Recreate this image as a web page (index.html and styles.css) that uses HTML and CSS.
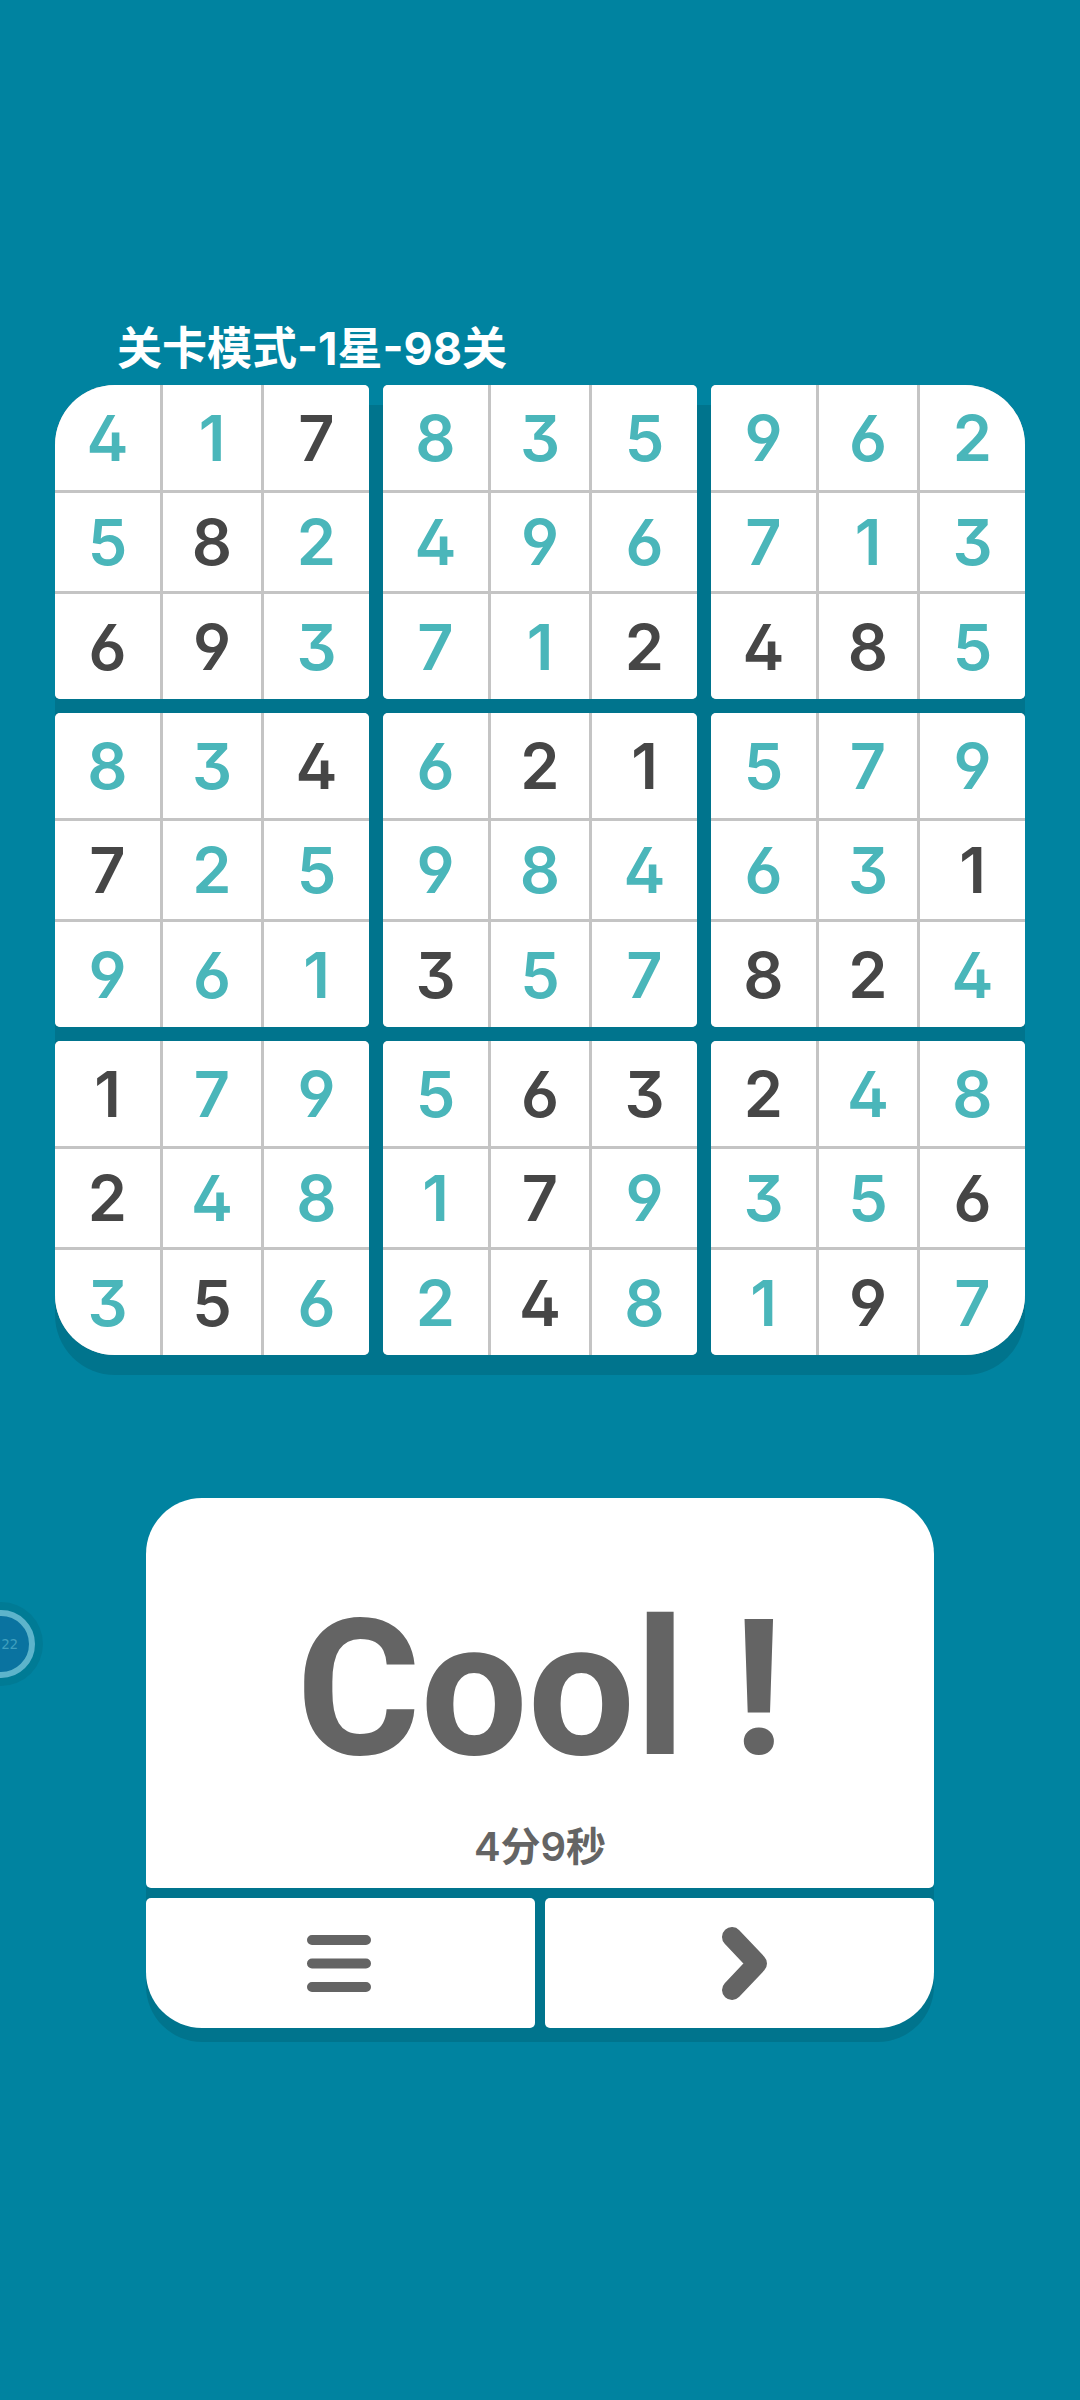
FILE: index.html
```html
<!DOCTYPE html>
<html lang="zh-CN">
<head>
    <meta charset="UTF-8">
    <meta name="viewport" content="width=device-width, initial-scale=1.0">
    <title>数独</title>
    <link rel="stylesheet" href="styles.css">
</head>
<body>

    <main class="game">
        <h1 class="level-title">关卡模式-1星-98关</h1>

        <div class="board" id="board"></div>

        <section class="result">
            <div class="result-panel">
                <p class="result-text">Cool !</p>
                <p class="result-time">4分9秒</p>
            </div>
            <div class="result-actions">
                <button class="btn" type="button" aria-label="菜单">
                    <svg class="icon" viewBox="0 0 90 90">
                        <path d="M16 22H70M16 45.5H70M16 69H70" stroke-width="10"/>
                    </svg>
                </button>
                <button class="btn" type="button" aria-label="下一关">
                    <svg class="icon" viewBox="0 0 90 90">
                        <path d="M37 19L62 45.5L37 72" stroke-width="20"/>
                    </svg>
                </button>
            </div>
        </section>
    </main>

    <button class="float-ball" type="button">22</button>

    <script>
        // g = given number, everything else was filled in by the player
        const rows = [
            '4 1 7g 8 3 5 9 6 2',
            '5 8g 2 4 9 6 7 1 3',
            '6g 9g 3 7 1 2g 4g 8g 5',
            '8 3 4g 6 2g 1g 5 7 9',
            '7g 2 5 9 8 4 6 3 1g',
            '9 6 1 3g 5 7 8g 2g 4',
            '1g 7 9 5 6g 3g 2g 4 8',
            '2g 4 8 1 7g 9 3 5 6g',
            '3 5g 6 2 4g 8 1 9g 7'
        ].map(row => row.split(' '));

        const board = document.getElementById('board');

        for (let b = 0; b < 9; b++) {
            const box = document.createElement('div');
            box.className = 'box';
            for (let i = 0; i < 9; i++) {
                const row = Math.floor(b / 3) * 3 + Math.floor(i / 3);
                const col = (b % 3) * 3 + (i % 3);
                const value = rows[row][col];
                const cell = document.createElement('div');
                cell.className = value.endsWith('g') ? 'cell given' : 'cell';
                cell.textContent = value[0];
                box.appendChild(cell);
            }
            board.appendChild(box);
        }
    </script>
</body>
</html>
```
FILE: styles.css
```css
:root {
    --bg: #0083a0;
    --shadow: #00748d;
    --line: #c4c4c4;
    --filled: #4ab6ba;
    --given: #464646;
    --text: #646464;
}

* {
    box-sizing: border-box;
}

body {
    margin: 0;
    min-height: 100vh;
    background: var(--bg);
    font-family: Inter, "Noto Sans CJK SC", sans-serif;
    color: var(--text);
    overflow-x: hidden;
}

.game {
    padding: 317px 55px 60px;
}

.level-title {
    margin: 0 0 4px 62px;
    font-size: 45px;
    line-height: 64px;
    font-weight: 700;
    color: white;
}

.board {
    display: grid;
    grid-template-columns: repeat(3, 1fr);
    gap: 14px;
    padding-bottom: 20px;
    border-radius: 60px;
    background: linear-gradient(transparent 20px, var(--shadow) 20px);
}

.box {
    display: grid;
    grid-template-columns: 105fr 98fr 105fr;
    grid-template-rows: 105fr 98fr 105fr;
    gap: 3px;
    aspect-ratio: 1;
    background: var(--line);
    border-radius: 5px;
    overflow: hidden;
}

.box:nth-child(1) { border-top-left-radius: 60px; }
.box:nth-child(3) { border-top-right-radius: 60px; }
.box:nth-child(7) { border-bottom-left-radius: 60px; }
.box:nth-child(9) { border-bottom-right-radius: 60px; }

.cell {
    display: flex;
    align-items: center;
    justify-content: center;
    background: white;
    color: var(--filled);
    font-size: 63px;
    line-height: 64px;
    font-weight: 600;
    font-feature-settings: "ss01", "cv09";
}

.given {
    color: var(--given);
}

.result {
    margin: 123px 91px 0;
    padding-bottom: 14px;
    border-radius: 56px;
    background: linear-gradient(transparent 14px, var(--shadow) 14px);
}

.result-panel {
    padding: 96px 20px 12px;
    background: white;
    border-radius: 56px 56px 5px 5px;
    text-align: center;
}

.result-text {
    margin: 0;
    font-family: Roboto, sans-serif;
    font-size: 190px;
    line-height: 190px;
    font-weight: 700;
}

.result-time {
    margin: 34px 0 0;
    font-size: 40px;
    line-height: 58px;
    font-weight: 600;
}

.result-actions {
    display: grid;
    grid-template-columns: 1fr 1fr;
    gap: 10px;
    margin-top: 10px;
}

.btn {
    display: flex;
    align-items: center;
    justify-content: center;
    padding: 20px;
    border: none;
    border-radius: 5px;
    background: white;
    color: var(--text);
    cursor: pointer;
}

.btn:first-child { border-bottom-left-radius: 56px; }
.btn:last-child { border-bottom-right-radius: 56px; }

.icon {
    width: 90px;
    height: 90px;
    fill: none;
    stroke: currentColor;
    stroke-linecap: round;
    stroke-linejoin: round;
}

/* half hidden behind the left edge of the screen */
.float-ball {
    position: absolute;
    top: 1610px;
    left: -33px;
    width: 68px;
    height: 68px;
    padding: 0 11px 0 0;
    border: 6px solid #5db4cb;
    border-radius: 50%;
    background: #0a73a0;
    box-shadow: 0 0 0 8px #007b95;
    color: #3f9fbe;
    font-family: "DejaVu Sans Mono", monospace;
    font-size: 14px;
    text-align: right;
}
```
